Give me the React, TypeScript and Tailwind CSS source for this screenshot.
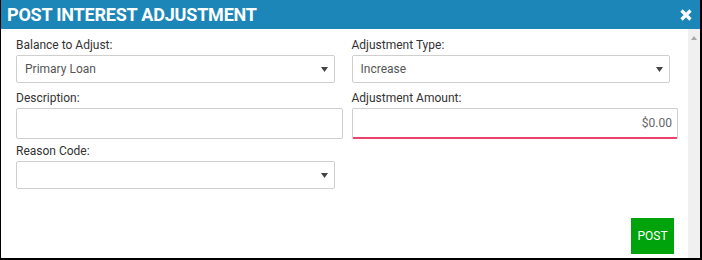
import React from 'react';

const font = { fontFamily: 'Roboto, "Liberation Sans", Arial, sans-serif' };

const Caret: React.FC = () => (
  <svg width="7" height="5" viewBox="0 0 7 5" className="shrink-0">
    <path d="M0 0h7L3.5 5z" fill="#444" />
  </svg>
);

const SelectBox: React.FC<{ value?: string }> = ({ value }) => (
  <div className="mr-[8px] flex h-[28px] items-center justify-between rounded-[2px] border border-[#cfcfcf] bg-white pl-[8px] pr-[6px] text-[12px] text-[#555]">
    <span>{value}</span>
    <Caret />
  </div>
);

const Field: React.FC<{ label: string; children: React.ReactNode }> = ({ label, children }) => (
  <div className="flex flex-col">
    <label className="mb-[2px] h-[16px] text-[12px] leading-[16px] text-[#333]">{label}</label>
    {children}
  </div>
);

export default function App() {
  return (
    <div
      className="flex h-[260px] w-[702px] flex-col border-b-2 border-l border-r-2 border-black bg-white"
      style={font}
    >
      {/* header */}
      <div className="flex h-[29px] shrink-0 items-center justify-between bg-[#1c86b9] pl-[6px] pr-[8px]">
        <h1 className="text-[18px] font-bold leading-none tracking-[-0.2px] text-white">POST INTEREST ADJUSTMENT</h1>
        <svg width="12" height="12" viewBox="0 0 12 12">
          <path d="M1.5 1.5l9 9M10.5 1.5l-9 9" stroke="#fff" strokeWidth="3.2" />
        </svg>
      </div>

      <div className="flex flex-1">
        <div className="flex flex-1 flex-col pl-[15px] pr-[10px] pt-[8px]">
          <div className="grid grid-cols-2 gap-x-[9px]">
            <Field label="Balance to Adjust:">
              <SelectBox value="Primary Loan" />
            </Field>
            <Field label="Adjustment Type:">
              <SelectBox value="Increase" />
            </Field>
          </div>

          <div className="mt-[7px] grid grid-cols-2 gap-x-[9px]">
            <Field label="Description:">
              <div className="h-[31px] rounded-[2px] border border-[#cfcfcf] bg-white" />
            </Field>
            <Field label="Adjustment Amount:">
              <div className="flex h-[31px] items-center justify-end rounded-[2px] border border-b-2 border-[#cfcfcf] border-b-[#e8436d] bg-white pr-[5px] text-[12px] text-[#666]">
                $0.00
              </div>
            </Field>
          </div>

          <div className="mt-[4px] grid grid-cols-2 gap-x-[9px]">
            <Field label="Reason Code:">
              <SelectBox />
            </Field>
            <div />
          </div>

          <div className="mt-[29px] flex justify-end pr-[4px]">
            <button className="h-[36px] w-[43px] bg-[#00a30b] text-[12px] text-white">POST</button>
          </div>
        </div>

        {/* scrollbar */}
        <div className="flex w-[12px] shrink-0 justify-center bg-[#f0f0f0] pt-[7px]">
          <svg width="6" height="4" viewBox="0 0 6 4">
            <path d="M3 0l3 4H0z" fill="#a8a8a8" />
          </svg>
        </div>
      </div>
    </div>
  );
}
